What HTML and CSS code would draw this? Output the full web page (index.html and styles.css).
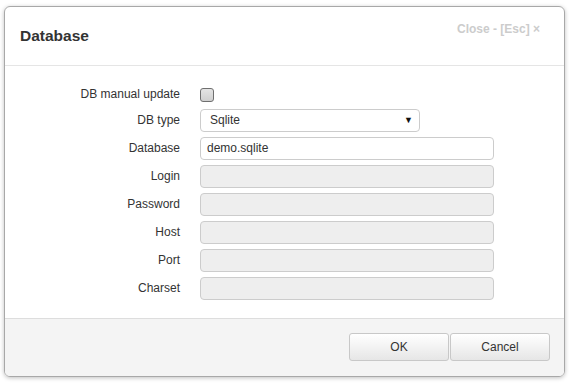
FILE: index.html
```html
<!DOCTYPE html>
<html lang="en">
<head>
    <meta charset="UTF-8">
    <title>Database</title>
    <link rel="stylesheet" href="styles.css">
</head>
<body>
    <div class="page">
        <div class="dialog">
            <div class="dialog__header">
                <h1 class="dialog__title">Database</h1>
                <span class="dialog__close">Close - [Esc] &times;</span>
            </div>

            <div class="dialog__body">
                <div class="form">
                    <label class="form__label form__label--short">DB manual update</label>
                    <div class="form__field form__field--short"><span class="checkbox"></span></div>

                    <label class="form__label">DB type</label>
                    <div class="form__field">
                        <div class="select">
                            <span>Sqlite</span>
                            <span class="select__arrow">&#9660;</span>
                        </div>
                    </div>

                    <label class="form__label">Database</label>
                    <div class="form__field"><div class="input">demo.sqlite</div></div>

                    <label class="form__label">Login</label>
                    <div class="form__field"><div class="input input--disabled"></div></div>

                    <label class="form__label">Password</label>
                    <div class="form__field"><div class="input input--disabled"></div></div>

                    <label class="form__label">Host</label>
                    <div class="form__field"><div class="input input--disabled"></div></div>

                    <label class="form__label">Port</label>
                    <div class="form__field"><div class="input input--disabled"></div></div>

                    <label class="form__label">Charset</label>
                    <div class="form__field"><div class="input input--disabled"></div></div>
                </div>
            </div>

            <div class="dialog__footer">
                <button class="button">OK</button>
                <button class="button">Cancel</button>
            </div>
        </div>
    </div>
</body>
</html>
```

FILE: styles.css
```css
body {
    margin: 0;
    background: #fff;
    font-family: "Liberation Sans", Arial, sans-serif;
    color: #333;
}

.page {
    padding: 6px 5px 6px 4px;
}

.dialog {
    width: 561px;
    height: 371px;
    box-sizing: border-box;
    border: 1px solid #a8a8a8;
    border-radius: 6px;
    box-shadow: 0 1px 4px rgba(0, 0, 0, 0.25);
    display: flex;
    flex-direction: column;
    overflow: hidden;
}

.dialog__header {
    height: 59px;
    box-sizing: border-box;
    border-bottom: 1px solid #e5e5e5;
    display: flex;
    justify-content: space-between;
    padding: 0 24px 0 15px;
}

.dialog__title {
    margin: 0;
    font-size: 15.5px;
    font-weight: bold;
    color: #333;
    line-height: 58px;
}

.dialog__close {
    font-size: 12px;
    font-weight: bold;
    color: #ccc;
    padding-top: 15px;
}

.dialog__body {
    padding: 19px 0 18px;
    border-bottom: 1px solid #ddd;
}

.form {
    display: grid;
    grid-template-columns: 175px 1fr;
    column-gap: 20px;
    row-gap: 5px;
    font-size: 12px;
}

.form__label {
    text-align: right;
    height: 23px;
    line-height: 23px;
}

.form__label--short,
.form__field--short {
    height: 19px;
    line-height: 19px;
}

.form__field {
    display: flex;
    align-items: center;
}

.checkbox {
    width: 12px;
    height: 12px;
    border: 1px solid #6f6f6f;
    border-radius: 3px;
    background: linear-gradient(#e4e4e4, #cfcfcf);
    margin-top: 1px;
}

.select,
.input {
    box-sizing: border-box;
    height: 23px;
    border: 1px solid #ccc;
    border-radius: 4px;
    padding: 0 6px;
    line-height: 21px;
    background: #fff;
    color: #333;
}

.select {
    width: 220px;
    display: flex;
    justify-content: space-between;
    padding-left: 9px;
}

.select__arrow {
    font-size: 9px;
    color: #111;
}

.input {
    width: 294px;
}

.input--disabled {
    background: #eee;
}

.dialog__footer {
    flex: 1;
    background: #f4f4f4;
    display: flex;
    justify-content: flex-end;
    align-items: flex-start;
    gap: 1px;
    padding: 14px 14px 0 0;
}

.button {
    width: 100px;
    height: 28px;
    border: 1px solid #c8c8c8;
    border-radius: 3px;
    background: linear-gradient(#fff, #e6e6e6);
    font-family: "Liberation Sans", Arial, sans-serif;
    font-size: 12px;
    color: #333;
}
```
